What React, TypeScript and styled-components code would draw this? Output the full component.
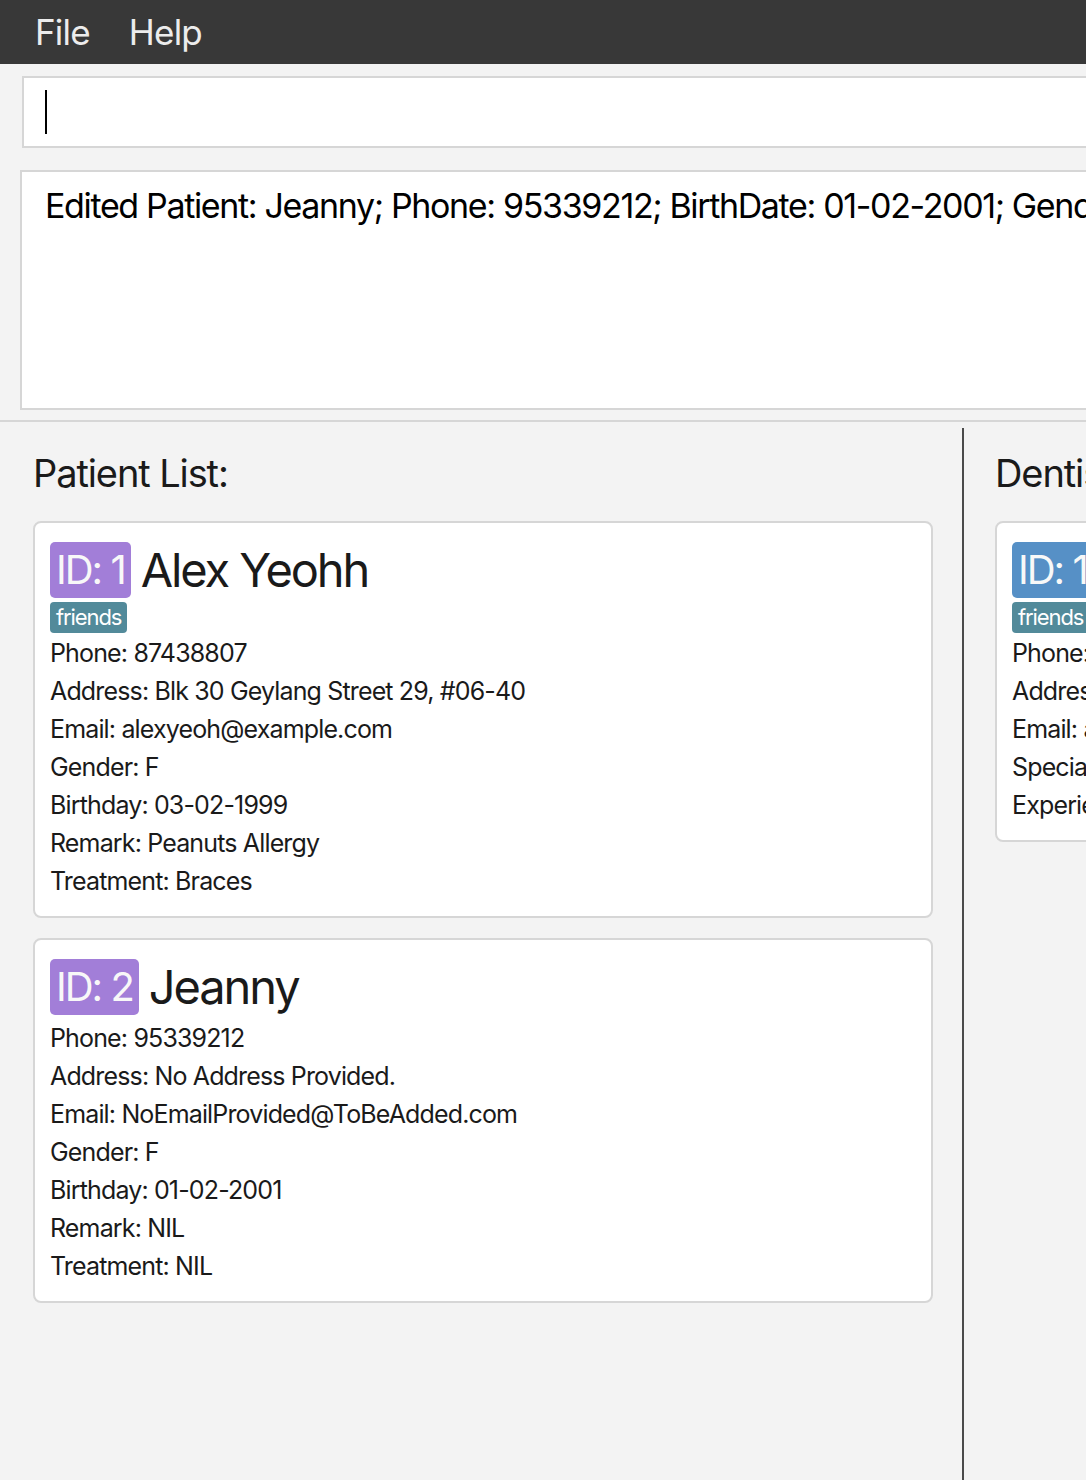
import React from "react";
import styled, { createGlobalStyle } from "styled-components";

const GlobalStyle = createGlobalStyle`
  html, body {
    margin: 0;
    padding: 0;
    background: #f3f3f3;
    font-family: Inter, "Noto Sans", "Liberation Sans", sans-serif;
  }
`;

type Person = {
  id: number;
  name: string;
  tags: string[];
  fields: Array<[string, string]>;
};

const patients: Person[] = [
  {
    id: 1,
    name: "Alex Yeohh",
    tags: ["friends"],
    fields: [
      ["Phone", "87438807"],
      ["Address", "Blk 30 Geylang Street 29, #06-40"],
      ["Email", "alexyeoh@example.com"],
      ["Gender", "F"],
      ["Birthday", "03-02-1999"],
      ["Remark", "Peanuts Allergy"],
      ["Treatment", "Braces"],
    ],
  },
  {
    id: 2,
    name: "Jeanny",
    tags: [],
    fields: [
      ["Phone", "95339212"],
      ["Address", "No Address Provided."],
      ["Email", "NoEmailProvided@ToBeAdded.com"],
      ["Gender", "F"],
      ["Birthday", "01-02-2001"],
      ["Remark", "NIL"],
      ["Treatment", "NIL"],
    ],
  },
];

const dentists: Person[] = [
  {
    id: 1,
    name: "Alex Yeoh",
    tags: ["friends"],
    fields: [
      ["Phone", "87438807"],
      ["Address", "Blk 30 Geylang Street 29, #06-40"],
      ["Email", "alexyeoh@example.com"],
      ["Specialisation", "Orthodontics"],
      ["Experience", "5 years"],
    ],
  },
];

function PersonCard({ person, kind }: { person: Person; kind: "patient" | "dentist" }) {
  return (
    <Card>
      <CardHeader>
        <IdBadge kind={kind}>ID: {person.id}</IdBadge>
        <Name>{person.name}</Name>
      </CardHeader>
      {person.tags.length > 0 && (
        <Tags>
          {person.tags.map((t) => (
            <Tag key={t}>{t}</Tag>
          ))}
        </Tags>
      )}
      {person.fields.map(([label, value]) => (
        <Field key={label}>
          {label}: {value}
        </Field>
      ))}
    </Card>
  );
}

export default function App() {
  return (
    <Window>
      <GlobalStyle />
      <MenuBar>
        <MenuItem>File</MenuItem>
        <MenuItem>Help</MenuItem>
      </MenuBar>
      <CommandArea>
        <CommandBox>
          <Caret />
        </CommandBox>
      </CommandArea>
      <ResultArea>
        <ResultBox>
          Edited Patient: Jeanny; Phone: 95339212; BirthDate: 01-02-2001; Gender: F; Remark: NIL
        </ResultBox>
      </ResultArea>
      <SplitPane>
        <ListPane side="left">
          <Heading>Patient List:</Heading>
          <CardList>
            {patients.map((p) => (
              <PersonCard key={p.id} person={p} kind="patient" />
            ))}
          </CardList>
        </ListPane>
        <Divider />
        <ListPane side="right">
          <Heading>Dentist List:</Heading>
          <CardList>
            {dentists.map((d) => (
              <PersonCard key={d.id} person={d} kind="dentist" />
            ))}
          </CardList>
        </ListPane>
      </SplitPane>
    </Window>
  );
}

const Window = styled.div`
  width: 1086px;
  height: 1480px;
  overflow: hidden;
  background: #f3f3f3;
  display: flex;
  flex-direction: column;
`;

const MenuBar = styled.div`
  height: 64px;
  flex-shrink: 0;
  background: #383838;
  display: flex;
  align-items: center;
  padding-left: 35px;
  gap: 39px;
`;

const MenuItem = styled.div`
  color: #ececec;
  font-size: 35px;
  line-height: 64px;
  letter-spacing: -0.8px;
`;

const CommandArea = styled.div`
  padding: 12px 0 0 22px;
  flex-shrink: 0;
`;

const CommandBox = styled.div`
  width: 1400px;
  height: 68px;
  background: #fff;
  border: 2px solid #d6d6d6;
  display: flex;
  align-items: center;
  padding-left: 21px;
`;

const Caret = styled.div`
  width: 2px;
  height: 44px;
  background: #000;
`;

const ResultArea = styled.div`
  padding: 22px 0 10px 20px;
  flex-shrink: 0;
  border-bottom: 2px solid #d6d6d6;
`;

const ResultBox = styled.div`
  width: 1600px;
  height: 240px;
  box-sizing: border-box;
  background: #fff;
  border: 2px solid #d6d6d6;
  padding: 13px 0 0 23px;
  font-size: 34px;
  line-height: 42px;
  color: #000;
  white-space: nowrap;
  letter-spacing: -1.35px;
`;

const SplitPane = styled.div`
  flex: 1;
  display: flex;
  padding-top: 6px;
  min-height: 0;
`;

const ListPane = styled.div<{ side: "left" | "right" }>`
  width: ${(p) => (p.side === "left" ? "962px" : "940px")};
  flex-shrink: 0;
  box-sizing: border-box;
  padding: ${(p) => (p.side === "left" ? "0 29px 0 33px" : "0 0 0 31px")};
`;

const Divider = styled.div`
  width: 2px;
  flex-shrink: 0;
  background: #4a4a4a;
`;

const Heading = styled.div`
  font-size: 38px;
  line-height: 48px;
  color: #1a1a1a;
  padding: 21px 0 24px;
  letter-spacing: -1.1px;
`;

const CardList = styled.div`
  display: flex;
  flex-direction: column;
  gap: 20px;
`;

const Card = styled.div`
  background: #fff;
  border: 2px solid #d6d6d6;
  border-radius: 8px;
  padding: 19px 15px 16px;
  display: flex;
  flex-direction: column;
  align-items: flex-start;
`;

const CardHeader = styled.div`
  display: flex;
  align-items: center;
  gap: 10px;
  height: 56px;
  margin-bottom: 4px;
  white-space: nowrap;
`;

const IdBadge = styled.div<{ kind: "patient" | "dentist" }>`
  background: ${(p) => (p.kind === "patient" ? "#a27ed8" : "#5690c6")};
  color: #f8f8f8;
  font-size: 40px;
  line-height: 56px;
  padding: 0 6px;
  border-radius: 5px;
  letter-spacing: -2px;
`;

const Name = styled.div`
  font-size: 47px;
  line-height: 56px;
  color: #1a1a1a;
  letter-spacing: -2.1px;
`;

const Tags = styled.div`
  display: flex;
  gap: 6px;
  margin-bottom: 1px;
`;

const Tag = styled.div`
  background: #528a9a;
  color: #fff;
  font-size: 22px;
  line-height: 31px;
  padding: 0 6px;
  border-radius: 4px;
  letter-spacing: -1.1px;
`;

const Field = styled.div`
  font-size: 25px;
  line-height: 38px;
  color: #1a1a1a;
  white-space: nowrap;
  letter-spacing: -0.85px;
`;
